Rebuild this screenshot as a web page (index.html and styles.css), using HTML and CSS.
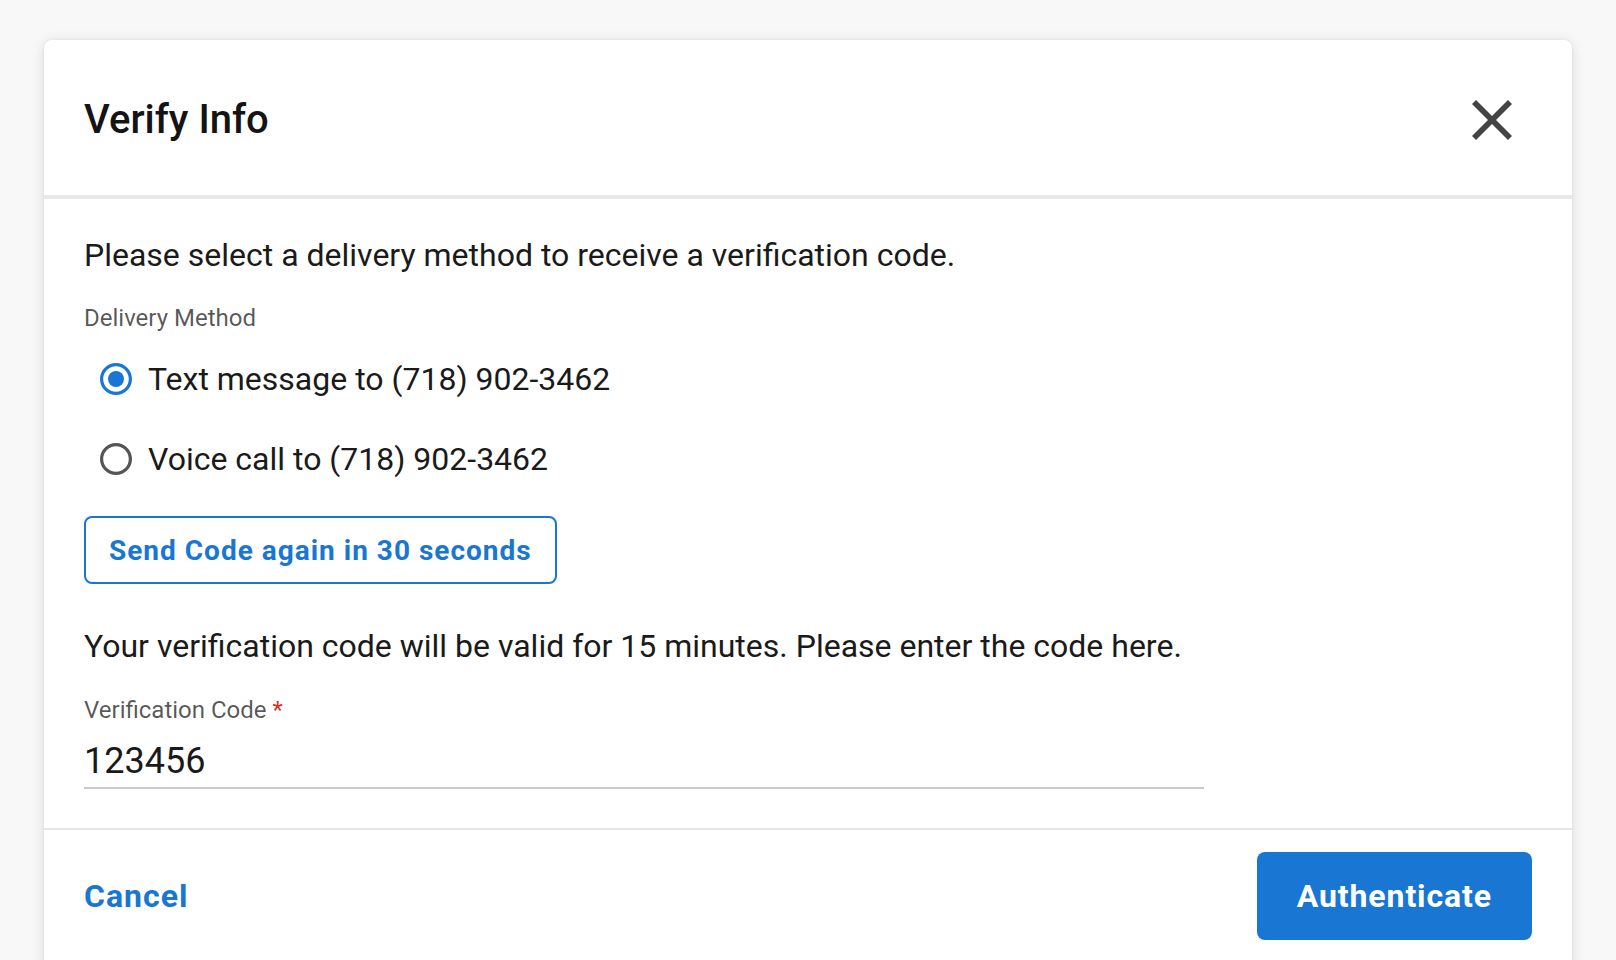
FILE: index.html
```html
<!DOCTYPE html>
<html lang="en">
<head>
<meta charset="utf-8">
<title>Verify Info</title>
<link rel="stylesheet" href="styles.css">
</head>
<body>
<div class="page">
  <div class="dialog" role="dialog" aria-labelledby="dlg-title">
    <header class="dialog-header">
      <h2 class="title" id="dlg-title">Verify Info</h2>
      <button class="close-btn" aria-label="Close">
        <svg class="close-icon" viewBox="5 5 14 14" width="40" height="40" aria-hidden="true">
          <path d="M19 6.41 17.59 5 12 10.59 6.41 5 5 6.41 10.59 12 5 17.59 6.41 19 12 13.41 17.59 19 19 17.59 13.41 12z"/>
        </svg>
      </button>
    </header>
    <div class="dialog-body">
      <p class="intro">Please select a delivery method to receive a verification code.</p>
      <div class="radio-group" role="radiogroup">
        <div class="field-label">Delivery Method</div>
        <label class="radio-row">
          <svg class="radio-icon checked" viewBox="2 2 20 20" width="32" height="32" aria-hidden="true">
            <path d="M12 2C6.48 2 2 6.48 2 12s4.48 10 10 10 10-4.48 10-10S17.520 2 12 2zm0 18c-4.42 0-8-3.58-8-8s3.58-8 8-8 8 3.58 8 8-3.58 8-8 8z"/>
            <circle cx="12" cy="12" r="5"/>
          </svg>
          <span class="radio-text">Text message to (718) 902-3462</span>
        </label>
        <label class="radio-row">
          <svg class="radio-icon" viewBox="2 2 20 20" width="32" height="32" aria-hidden="true">
            <path d="M12 2C6.48 2 2 6.48 2 12s4.48 10 10 10 10-4.48 10-10S17.52 2 12 2zm0 18c-4.42 0-8-3.58-8-8s3.58-8 8-8 8 3.58 8 8-3.58 8-8 8z"/>
          </svg>
          <span class="radio-text">Voice call to (718) 902-3462</span>
        </label>
      </div>
      <button class="outline-btn">Send Code again in 30 seconds</button>
      <p class="note">Your verification code will be valid for 15 minutes. Please enter the code here.</p>
      <div class="field">
        <div class="field-label code-label">Verification Code <span class="req">*</span></div>
        <div class="input">123456</div>
      </div>
    </div>
    <footer class="dialog-footer">
      <button class="text-btn">Cancel</button>
      <button class="primary-btn">Authenticate</button>
    </footer>
  </div>
</div>
</body>
</html>
```

FILE: styles.css
```css
html, body {
  margin: 0;
  padding: 0;
  height: 100%;
  overflow: hidden;
}

body {
  background: #f8f8f8;
  font-family: Roboto, "Liberation Sans", Arial, sans-serif;
  color: rgba(0, 0, 0, 0.87);
}

.page {
  padding: 40px 44px 0;
}

.dialog {
  background: #ffffff;
  border-radius: 8px;
  box-shadow: 0 2px 14px rgba(0, 0, 0, 0.12), 0 0 3px rgba(0, 0, 0, 0.06);
  min-height: 1000px;
}

.dialog-header {
  height: 155px;
  padding: 0 40px;
  display: flex;
  align-items: center;
  justify-content: space-between;
  border-bottom: 4px solid #e8e8e8;
  box-sizing: content-box;
}

.title {
  margin: 5px 0 0;
  font-size: 40px;
  font-weight: 500;
  line-height: 64px;
  color: #141414;
}

.close-btn {
  border: 0;
  background: none;
  padding: 20px;
  margin-top: 4px;
  display: flex;
  cursor: pointer;
}

.close-icon {
  fill: #444444;
}

.dialog-body {
  padding: 32px 40px 39px;
  display: flex;
  flex-direction: column;
  align-items: flex-start;
}

.intro,
.note {
  margin: 0;
  font-size: 32px;
  line-height: 48px;
  color: #1a1a1a;
}

.radio-group {
  margin-top: 21px;
  display: flex;
  flex-direction: column;
}

.field-label {
  font-size: 24px;
  line-height: 36px;
  color: rgba(0, 0, 0, 0.66);
}

.radio-group .field-label {
  margin-bottom: 3px;
}

.radio-row {
  height: 80px;
  display: flex;
  align-items: center;
  gap: 16px;
  padding-left: 16px;
  cursor: pointer;
}

.radio-icon {
  fill: #555555;
  flex: none;
}

.radio-icon.checked {
  fill: #1976d2;
}

.radio-text {
  font-size: 32px;
  line-height: 48px;
  color: #1a1a1a;
}

.outline-btn {
  margin-top: 17px;
  height: 68px;
  box-sizing: border-box;
  padding: 0 23px;
  border: 2px solid #1976d2;
  border-radius: 8px;
  background: #ffffff;
  color: #1976d2;
  font-family: Roboto, "Liberation Sans", Arial, sans-serif;
  font-size: 28px;
  font-weight: 700;
  letter-spacing: 1px;
  display: inline-flex;
  align-items: center;
  cursor: pointer;
}

.note {
  margin-top: 38px;
}

.field {
  margin-top: 22px;
  display: flex;
  flex-direction: column;
}

.code-label {
  margin-bottom: 7px;
}

.req {
  color: #d32f2f;
}

.input {
  width: 1120px;
  font-size: 36px;
  line-height: 52px;
  color: #1a1a1a;
  border-bottom: 2px solid #cacaca;
}

.dialog-footer {
  border-top: 2px solid #e6e6e6;
  padding: 22px 40px 20px;
  display: flex;
  align-items: center;
  justify-content: space-between;
}

.text-btn {
  border: 0;
  background: none;
  padding: 0;
  color: #1976d2;
  font-family: Roboto, "Liberation Sans", Arial, sans-serif;
  font-size: 32px;
  font-weight: 700;
  letter-spacing: 1px;
  line-height: 56px;
  cursor: pointer;
}

.primary-btn {
  border: 0;
  border-radius: 8px;
  background: #1976d2;
  color: #ffffff;
  padding: 16px 40px;
  font-family: Roboto, "Liberation Sans", Arial, sans-serif;
  font-size: 32px;
  font-weight: 700;
  letter-spacing: 0.9px;
  line-height: 56px;
  cursor: pointer;
}
```
